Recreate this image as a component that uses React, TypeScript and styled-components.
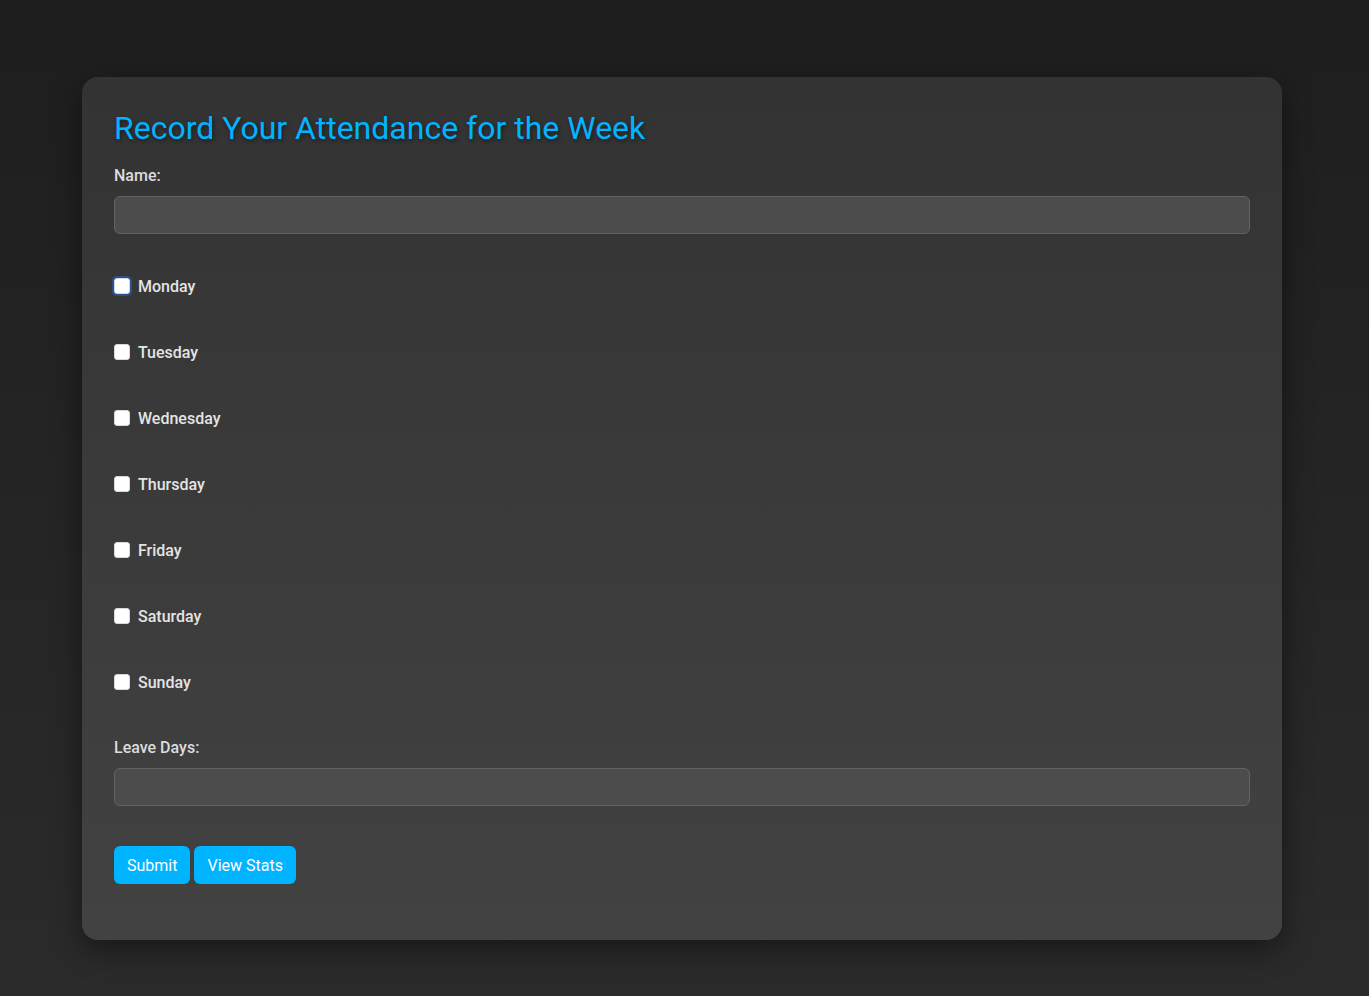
import React from "react";
import styled, { createGlobalStyle } from "styled-components";

const GlobalStyle = createGlobalStyle`
  html, body { margin: 0; padding: 0; }
  body {
    min-height: 996px;
    background: linear-gradient(180deg, #1e1e1e 0%, #2b2b2b 100%);
    font-family: Roboto, "Liberation Sans", sans-serif;
    color: #e0e0e0;
  }
`;

const Page = styled.div`
  padding: 77px 87px 56px 82px;
`;

const Card = styled.form`
  width: 1200px;
  box-sizing: border-box;
  padding: 32px;
  border-radius: 16px;
  background: linear-gradient(180deg, #333333 0%, #424242 100%);
  box-shadow: 0 10px 30px rgba(0, 0, 0, 0.45);
`;

const Title = styled.h1`
  margin: 0 0 19px;
  font-size: 32px;
  line-height: 38px;
  font-weight: 400;
  color: #00b4ff;
  text-shadow: 1px 2px 4px rgba(0, 0, 0, 0.5);
`;

const FieldLabel = styled.label<{ $top?: number }>`
  display: block;
  margin: ${(p) => p.$top ?? 0}px 0 11px;
  font-size: 16px;
  line-height: 19px;
  font-weight: 500;
  color: #dcdcdc;
`;

const TextInput = styled.input<{ $last?: boolean }>`
  display: block;
  width: 100%;
  box-sizing: border-box;
  height: 38px;
  margin: 0 0 ${(p) => (p.$last ? 0 : 19)}px;
  padding: 8px 12px;
  border: 1px solid #636363;
  border-radius: 6px;
  background: #4c4c4c;
  color: #fff;
  font-size: 16px;
  font-family: inherit;
  outline: none;
`;

const Days = styled.div`
  display: flex;
  flex-direction: column;
`;

const DayRow = styled.label`
  display: flex;
  align-items: center;
  gap: 8px;
  height: 66px;
  font-size: 16px;
  font-weight: 500;
  color: #e4e4e4;
`;

const Check = styled.input<{ $focus?: boolean }>`
  appearance: none;
  -webkit-appearance: none;
  margin: 0;
  width: 16px;
  height: 16px;
  border-radius: 3px;
  background: #ffffff;
  border: 1px solid #d8d8d8;
  box-sizing: border-box;
  box-shadow: ${(p) => (p.$focus ? "0 0 0 2px #2a4f8f" : "none")};
`;

const Actions = styled.div`
  display: flex;
  gap: 4px;
  margin-top: 40px;
  margin-bottom: 24px;
`;

const Button = styled.button`
  height: 38px;
  padding: 0 13px;
  border: none;
  border-radius: 6px;
  background: #00b4ff;
  color: #ffffff;
  font-size: 16px;
  font-family: inherit;
  font-weight: 400;
  cursor: pointer;
`;

const days = ["Monday", "Tuesday", "Wednesday", "Thursday", "Friday", "Saturday", "Sunday"];

export default function App() {
  return (
    <>
      <GlobalStyle />
      <Page>
        <Card onSubmit={(e) => e.preventDefault()}>
          <Title>Record Your Attendance for the Week</Title>
          <FieldLabel htmlFor="name">Name:</FieldLabel>
          <TextInput id="name" type="text" />
          <Days>
            {days.map((d, i) => (
              <DayRow key={d}>
                <Check type="checkbox" $focus={i === 0} />
                {d}
              </DayRow>
            ))}
          </Days>
          <FieldLabel htmlFor="leave" $top={23}>Leave Days:</FieldLabel>
          <TextInput id="leave" type="text" $last />
          <Actions>
            <Button type="submit">Submit</Button>
            <Button type="button">View Stats</Button>
          </Actions>
        </Card>
      </Page>
    </>
  );
}
